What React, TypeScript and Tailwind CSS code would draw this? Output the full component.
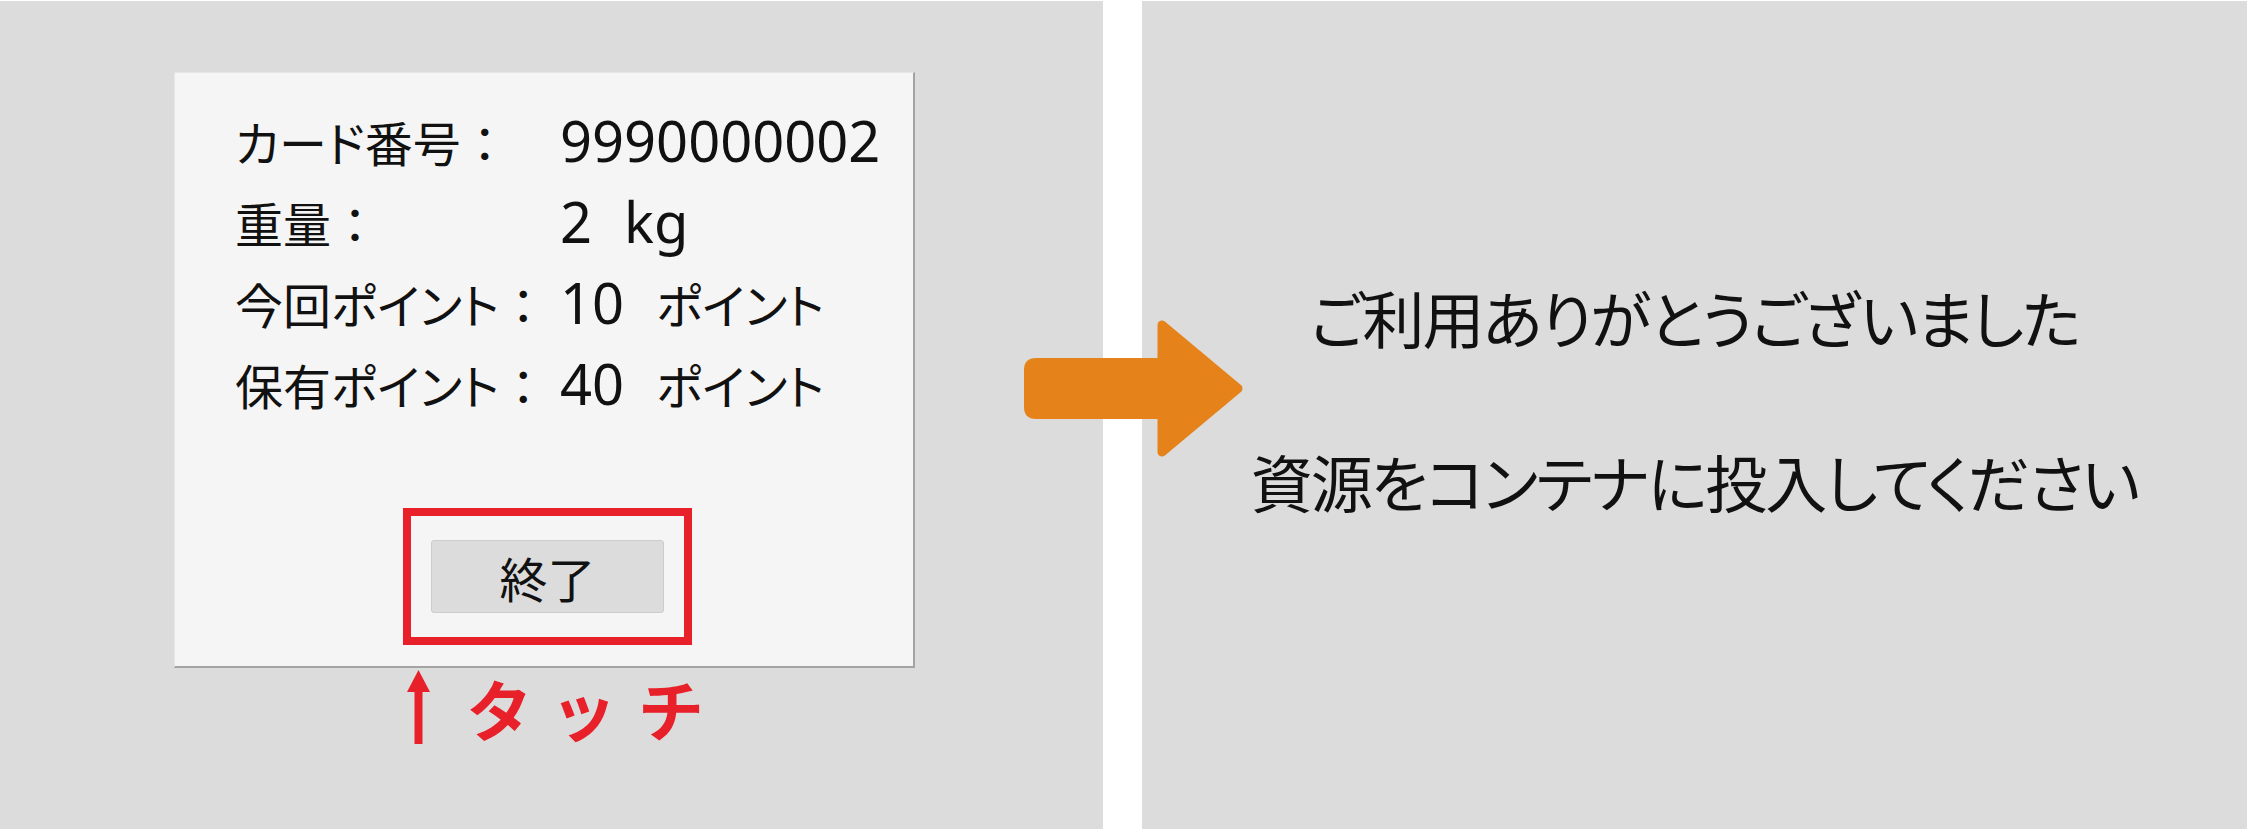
import React from 'react';

const jp = { fontFamily: '"Noto Sans CJK JP", "Noto Sans", sans-serif', fontFeatureSettings: '"palt"' };
const jpPlain = { fontFamily: '"Noto Sans CJK JP", "Noto Sans", sans-serif' };
const latin = { fontFamily: '"Noto Sans", "Open Sans", sans-serif' };

interface Row {
  label: string;
  value: string;
  unit?: string;
}

const rows: Row[] = [
  { label: 'カード番号', value: '9990000002' },
  { label: '重量', value: '2', unit: 'kg' },
  { label: '今回ポイント', value: '10', unit: 'ポイント' },
  { label: '保有ポイント', value: '40', unit: 'ポイント' },
];

function OrangeArrow() {
  return (
    <svg
      className="absolute left-[1024px] top-[320px]"
      width="219"
      height="137"
      viewBox="0 0 219 137"
    >
      <path d="M12 38 H142 V99 H12 Q0 99 0 87 V50 Q0 38 12 38 Z" fill="#e6821a" />
      <polygon
        points="138,5 214,68.5 138,132"
        fill="#e6821a"
        stroke="#e6821a"
        strokeWidth="9"
        strokeLinejoin="round"
      />
    </svg>
  );
}

export default function App() {
  return (
    <div className="relative w-[2247px] h-[830px] bg-white flex gap-[39px] py-px overflow-hidden">
      {/* left: result screen */}
      <div className="w-[1103px] h-full bg-[#dcdcdc] pl-[174px] pt-[71px]">
        <div className="w-[741px] h-[596px] bg-[#f5f5f5] border-t border-l border-[#e6e6e6] border-r-2 border-b-2 border-r-[#a3a3a3] border-b-[#a3a3a3] flex flex-col pl-[60px] pt-[27px] pb-[21px] text-[#111]">
          {rows.map((row) => (
            <div key={row.label} className="grid grid-cols-[325px_1fr] items-baseline h-[81px] leading-[81px]">
              <span className="text-[48px]">
                <span style={jp}>{row.label}</span>
                <span style={jpPlain}>：</span>
              </span>
              <span className="flex items-baseline gap-[32px]">
                <span className="text-[56px]" style={latin}>
                  {row.value}
                </span>
                {row.unit && (
                  <span className={row.unit === 'kg' ? 'text-[56px]' : 'text-[48px]'} style={row.unit === 'kg' ? latin : jp}>
                    {row.unit}
                  </span>
                )}
              </span>
            </div>
          ))}

          <div className="mt-auto ml-[168px] w-[289px] h-[137px] border-[8px] border-[#e8202a] flex items-center justify-center">
            <button className="w-[233px] h-[73px] bg-[#dcdcdc] border border-[#cccccc] rounded-[3px] text-[48px] leading-none text-[#111]" style={jp}>
              終了
            </button>
          </div>
        </div>

        <div className="flex items-start ml-[233px] mt-[2px]">
          <svg width="23" height="74" viewBox="0 0 23 74">
            <polygon points="0,22 11.5,0 23,22" fill="#e8202a" />
            <rect x="7.5" y="18" width="8" height="56" fill="#e8202a" />
          </svg>
          <span className="ml-[38px] -mt-[8px] text-[66px] font-bold tracking-[28px] text-[#e8202a] leading-[90px]" style={jp}>
            タッチ
          </span>
        </div>
      </div>

      {/* right: thank you screen */}
      <div className="flex-1 h-full bg-[#dcdcdc] flex flex-col items-center pt-[285px] gap-[102px] text-[#111]">
        <div className="text-[62px] leading-none tracking-[-2px]" style={jp}>
          ご利用ありがとうございました
        </div>
        <div className="text-[62px] leading-none tracking-[-2px]" style={jp}>
          資源をコンテナに投入してください
        </div>
      </div>

      <OrangeArrow />
    </div>
  );
}
